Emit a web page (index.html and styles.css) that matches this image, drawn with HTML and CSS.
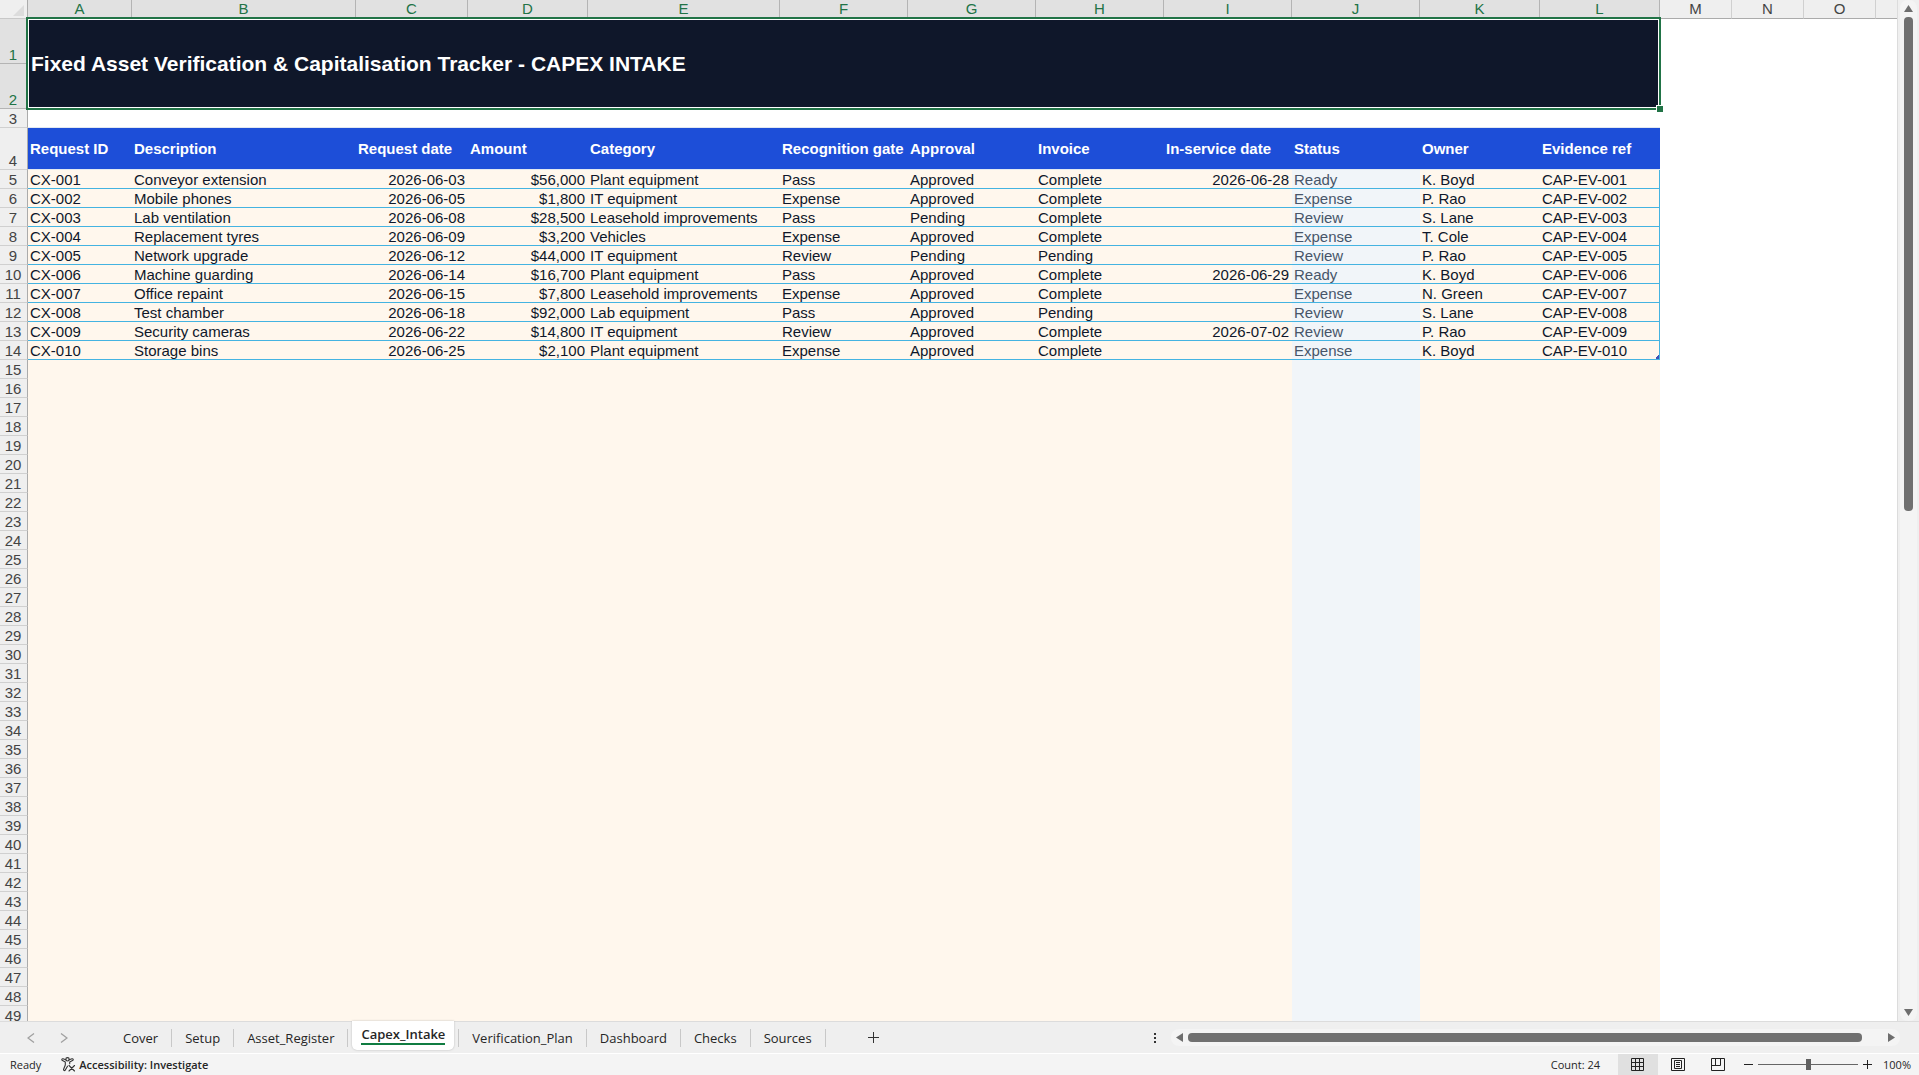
FILE: index.html
```html
<!DOCTYPE html>
<html lang="en">
<head>
  <meta charset="UTF-8">
  <meta name="viewport" content="width=device-width, initial-scale=1.0">
  <title>Fixed Asset Verification &amp; Capitalisation Tracker</title>
  <link rel="stylesheet" href="styles.css">
</head>
<body>
  <main class="workspace">
    <div class="grid">
      <table class="sheet">
        <colgroup>
          <col class="w-row">
          <col class="w-104"><col class="w-224"><col class="w-112"><col class="w-120">
          <col class="w-192"><col class="w-128"><col class="w-128"><col class="w-128">
          <col class="w-128"><col class="w-128"><col class="w-120"><col class="w-120">
          <col class="w-72"><col class="w-72"><col class="w-72"><col>
        </colgroup>
        <thead>
          <tr id="letters">
            <th class="corner"><svg width="11" height="11" viewBox="0 0 11 11"><path d="M11 0V11H0Z" fill="#dcdcdc"/></svg></th>
          </tr>
        </thead>
        <tbody id="rows">
          <tr class="title-row">
            <th class="num selected">1</th>
            <td class="title" colspan="12" rowspan="2">Fixed Asset Verification &amp; Capitalisation Tracker - CAPEX INTAKE<span class="handle"></span></td>
            <td colspan="4"></td>
          </tr>
          <tr class="title-row">
            <th class="num selected">2</th>
            <td colspan="4"></td>
          </tr>
          <tr>
            <th class="num">3</th>
            <td class="above-head" colspan="12"></td>
            <td colspan="4"></td>
          </tr>
          <tr class="head-row">
            <th class="num">4</th>
            <th>Request ID</th>
            <th>Description</th>
            <th>Request date</th>
            <th>Amount</th>
            <th>Category</th>
            <th>Recognition gate</th>
            <th>Approval</th>
            <th>Invoice</th>
            <th>In-service date</th>
            <th>Status</th>
            <th>Owner</th>
            <th>Evidence ref</th>
            <td colspan="4"></td>
          </tr>
        </tbody>
      </table>
    </div>
    <div class="vscroll">
      <button class="arrow" aria-label="Scroll up"><svg width="9" height="7" viewBox="0 0 9 7"><path d="M4.5 0 9 7H0Z" fill="#6e6e6e"/></svg></button>
      <div class="track"><div class="thumb"></div></div>
      <button class="arrow" aria-label="Scroll down"><svg width="9" height="7" viewBox="0 0 9 7"><path d="M0 0H9L4.5 7Z" fill="#6e6e6e"/></svg></button>
    </div>
  </main>

  <nav class="tabbar">
    <div class="tab-nav">
      <button aria-label="Previous sheet"><svg width="8" height="10" viewBox="0 0 8 10"><path d="M7 .5 1 5 7 9.500" fill="none" stroke="#a0a0a0" stroke-width="1.300"/></svg></button>
      <button aria-label="Next sheet"><svg width="8" height="10" viewBox="0 0 8 10"><path d="M1 .5 7 5 1 9.500" fill="none" stroke="#a0a0a0" stroke-width="1.300"/></svg></button>
    </div>
    <div class="tabs">
      <button class="tab">Cover</button>
      <button class="tab">Setup</button>
      <button class="tab">Asset_Register</button>
      <button class="tab active"><span>Capex_Intake</span></button>
      <button class="tab">Verification_Plan</button>
      <button class="tab">Dashboard</button>
      <button class="tab">Checks</button>
      <button class="tab">Sources</button>
    </div>
    <button class="add" aria-label="New sheet"><svg width="11" height="11" viewBox="0 0 11 11"><path d="M5.500 0V11M0 5.500H11" stroke="#333" stroke-width="1"/></svg></button>
    <button class="dots" aria-label="Resize tabs"><svg width="2" height="10" viewBox="0 0 2 10"><path d="M0 0h2v2H0zM0 4h2v2H0zM0 8h2v2H0z" fill="#333"/></svg></button>
    <div class="hscroll">
      <button class="arrow" aria-label="Scroll left"><svg width="7" height="9" viewBox="0 0 7 9"><path d="M7 0V9L0 4.500Z" fill="#6e6e6e"/></svg></button>
      <div class="track"><div class="thumb"></div></div>
      <button class="arrow" aria-label="Scroll right"><svg width="7" height="9" viewBox="0 0 7 9"><path d="M0 0 7 4.500 0 9Z" fill="#6e6e6e"/></svg></button>
    </div>
  </nav>

  <footer class="statusbar">
    <span class="ready">Ready</span>
    <button class="access">
      <svg width="15" height="15" viewBox="0 0 15 15" fill="none" stroke="#333" stroke-width="1.100" stroke-linecap="round" stroke-linejoin="round">
        <circle cx="6.500" cy="2.300" r="1.700"/>
        <path d="M4.800 2.800 2 1.800C.8 1.600.3 3 1.500 3.600L4.300 5V8L2.600 12.200C2.300 13.700 3.800 14 4.300 13L6.500 9.200M8.200 2.800 11 1.800C12.300 1.600 12.700 3 11.500 3.600L8.700 5V6.800"/>
        <path d="M8 8.500 13.500 14M13.500 8.500 8 14"/>
      </svg>
      Accessibility: Investigate
    </button>
    <span class="count">Count: 24</span>
    <div class="views">
      <button class="view on" aria-label="Normal"><svg width="14" height="14" viewBox="0 0 14 14"><path d="M.5 .5H12.500V12.500H.5ZM4.500 .5V12.500M8.500 .5V12.500M.5 4.500H12.500M.5 8.500H12.500" fill="none" stroke="#222"/></svg></button>
      <button class="view" aria-label="Page Layout"><svg width="14" height="14" viewBox="0 0 14 14"><path d="M.5 .5H13.500V12.500H.5ZM3.500 2.500H10.500V10.500H3.500ZM5 4.500H9M5 6.500H9M5 8.500H9" fill="none" stroke="#222"/></svg></button>
      <button class="view" aria-label="Page Break Preview"><svg width="14" height="14" viewBox="0 0 14 14"><path d="M.5 .5H13.500V12.500H.5ZM4.500 .5V7.500M9.500 .5V7.500M.5 7.500H9.500" fill="none" stroke="#222"/></svg></button>
    </div>
    <div class="zoom">
      <button aria-label="Zoom out"><svg width="9" height="9" viewBox="0 0 9 9"><path d="M0 4.500H9" stroke="#222"/></svg></button>
      <input type="range" min="0" max="100" value="50" aria-label="Zoom">
      <button aria-label="Zoom in"><svg width="9" height="9" viewBox="0 0 9 9"><path d="M0 4.500H9M4.500 0V9" stroke="#222"/></svg></button>
      <span class="percent">100%</span>
    </div>
  </footer>

  <script>
    const requests = [
      ['CX-001', 'Conveyor extension', '2026-06-03', '$56,000', 'Plant equipment', 'Pass', 'Approved', 'Complete', '2026-06-28', 'Ready', 'K. Boyd', 'CAP-EV-001'],
      ['CX-002', 'Mobile phones', '2026-06-05', '$1,800', 'IT equipment', 'Expense', 'Approved', 'Complete', '', 'Expense', 'P. Rao', 'CAP-EV-002'],
      ['CX-003', 'Lab ventilation', '2026-06-08', '$28,500', 'Leasehold improvements', 'Pass', 'Pending', 'Complete', '', 'Review', 'S. Lane', 'CAP-EV-003'],
      ['CX-004', 'Replacement tyres', '2026-06-09', '$3,200', 'Vehicles', 'Expense', 'Approved', 'Complete', '', 'Expense', 'T. Cole', 'CAP-EV-004'],
      ['CX-005', 'Network upgrade', '2026-06-12', '$44,000', 'IT equipment', 'Review', 'Pending', 'Pending', '', 'Review', 'P. Rao', 'CAP-EV-005'],
      ['CX-006', 'Machine guarding', '2026-06-14', '$16,700', 'Plant equipment', 'Pass', 'Approved', 'Complete', '2026-06-29', 'Ready', 'K. Boyd', 'CAP-EV-006'],
      ['CX-007', 'Office repaint', '2026-06-15', '$7,800', 'Leasehold improvements', 'Expense', 'Approved', 'Complete', '', 'Expense', 'N. Green', 'CAP-EV-007'],
      ['CX-008', 'Test chamber', '2026-06-18', '$92,000', 'Lab equipment', 'Pass', 'Approved', 'Pending', '', 'Review', 'S. Lane', 'CAP-EV-008'],
      ['CX-009', 'Security cameras', '2026-06-22', '$14,800', 'IT equipment', 'Review', 'Approved', 'Complete', '2026-07-02', 'Review', 'P. Rao', 'CAP-EV-009'],
      ['CX-010', 'Storage bins', '2026-06-25', '$2,100', 'Plant equipment', 'Expense', 'Approved', 'Complete', '', 'Expense', 'K. Boyd', 'CAP-EV-010']
    ];
    const rightAligned = [2, 3, 8];
    const statusCol = 9;
    const firstRow = 5;
    const lastRow = 49;

    // Column letters
    const letters = document.getElementById('letters');
    'ABCDEFGHIJKLMNO'.split('').forEach((letter, i) => {
      const th = document.createElement('th');
      th.className = i < 12 ? 'letter selected' : 'letter';
      th.textContent = letter;
      letters.appendChild(th);
    });
    letters.insertAdjacentHTML('beforeend', '<th class="letter last"></th>');

    // Data rows, then the empty input rows
    const tbody = document.getElementById('rows');
    for (let n = firstRow; n <= lastRow; n++) {
      const data = requests[n - firstRow];
      const row = document.createElement('tr');
      if (data) row.className = 'data-row';
      let html = `<th class="num">${n}</th>`;
      for (let c = 0; c < 12; c++) {
        let cls = c === statusCol ? 'input status' : 'input';
        if (rightAligned.includes(c)) cls += ' right';
        html += `<td class="${cls}">${data ? data[c] : ''}</td>`;
      }
      row.innerHTML = html + '<td colspan="4"></td>';
      tbody.appendChild(row);
    }
  </script>
</body>
</html>
```
FILE: styles.css
```css
* {
  box-sizing: border-box;
}
body {
  margin: 0;
  height: 100vh;
  display: flex;
  flex-direction: column;
  overflow: hidden;
  background: #efefef;
  color: #262626;
  font-family: "Open Sans", "Noto Sans", sans-serif;
}
button {
  display: flex;
  align-items: center;
  justify-content: center;
  padding: 0;
  border: none;
  background: none;
  color: inherit;
  font: inherit;
  cursor: pointer;
}
svg {
  display: block;
}

/* Sheet */
.workspace {
  flex: 1;
  min-height: 0;
  display: flex;
}
.grid {
  flex: 1;
  min-width: 0;
  overflow: hidden;
  background: #fff;
  border-right: 1px solid #dcdcdc;
}
.sheet {
  width: 100%;
  table-layout: fixed;
  border-collapse: separate;
  border-spacing: 0;
  font-family: Arial, "Liberation Sans", sans-serif;
  font-size: 15px;
  line-height: 16px;
  color: #0f172a;
}
.w-row { width: 28px; }
.w-72 { width: 72px; }
.w-104 { width: 104px; }
.w-112 { width: 112px; }
.w-120 { width: 120px; }
.w-128 { width: 128px; }
.w-192 { width: 192px; }
.w-224 { width: 224px; }

.sheet tr {
  height: 19px;
}
.sheet th,
.sheet td {
  padding: 2px 0 0;
  white-space: nowrap;
}
.sheet .corner {
  background: #efefef;
  border-right: 1px solid #ababab;
  border-bottom: 1px solid #c8c8c8;
}
.corner svg {
  margin-left: 13px;
}
.sheet .letter {
  padding-top: 0;
  line-height: 18px;
  background: #efefef;
  border-right: 1px solid #d0d0d0;
  border-bottom: 1px solid #ababab;
  color: #444;
  font-weight: normal;
}
.sheet .letter.selected {
  background: #e1e1e1;
  border-right-color: #b4b4b4;
  color: #217346;
}
.sheet .letter.last {
  border-right: none;
}
.sheet .num {
  padding-right: 1px;
  vertical-align: bottom;
  text-align: center;
  background: #efefef;
  border-right: 1px solid #ababab;
  border-bottom: 1px solid #d0d0d0;
  color: #444;
  font-weight: normal;
}
.sheet .num.selected {
  background: #e1e1e1;
  border-bottom-color: #b4b4b4;
  color: #217346;
}
.sheet .title-row {
  height: 45px;
}
.sheet .title {
  position: relative;
  padding: 0 0 0 3px;
  background: #0f172a;
  color: #fff;
  font-size: 21px;
  font-weight: bold;
}
/* selection frame */
.title::after {
  content: "";
  position: absolute;
  top: -2px;
  right: -1px;
  bottom: -1px;
  left: -2px;
  border: 2px solid #217346;
  box-shadow: inset 0 0 0 1px #fff;
}
.handle {
  position: absolute;
  right: -3px;
  bottom: -3px;
  z-index: 1;
  width: 7px;
  height: 7px;
  background: #217346;
  border: 1px solid #fff;
  border-width: 1px 0 0 1px;
}
.sheet .above-head {
  border-bottom: 1px solid #e2e8f0;
}
.sheet .head-row {
  height: 42px;
}
.head-row th:not(.num) {
  padding: 0 0 0 2px;
  text-align: left;
  background: #1d4ed8;
  border-bottom: 1px solid #e2e8f0;
  color: #fff;
}
.sheet .input {
  padding-left: 2px;
  background: #fff7ed;
}
.sheet .status {
  background: #f1f5f9;
  color: #475569;
}
.sheet .right {
  padding-right: 3px;
  text-align: right;
}
.data-row .input {
  border-bottom: 1px solid #44b3e1;
}
.data-row .input:nth-child(13) {
  border-right: 1px solid #44b3e1;
}
.data-row:nth-child(14) .input:nth-child(13) {
  background: linear-gradient(135deg, transparent 50%, #3f51b5 50%) right bottom / 4px 4px no-repeat #fff7ed;
}

/* Scrollbars */
.vscroll {
  display: flex;
  flex-direction: column;
  width: 17px;
  margin: 0 2px;
  border-radius: 8px;
  background: #f4f4f4;
}
.vscroll .arrow {
  height: 17px;
}
.vscroll .track {
  flex: 1;
  padding: 0 4px;
}
.vscroll .thumb {
  height: 50%;
  border-radius: 4px;
  background: #707070;
}
.hscroll {
  flex: 1;
  display: flex;
  align-items: center;
  max-width: 38%;
  height: 17px;
  margin-right: 19px;
  border-radius: 8px;
  background: #f4f4f4;
}
.hscroll .arrow {
  width: 17px;
  height: 17px;
}
.hscroll .track {
  flex: 1;
}
.hscroll .thumb {
  width: 97%;
  height: 9px;
  border-radius: 4px;
  background: #707070;
}

/* Sheet tabs */
.tabbar {
  display: flex;
  align-items: center;
  height: 33px;
  border-top: 1px solid #dcdcdc;
  border-bottom: 1px solid #fff;
  font-size: 13px;
}
.tab-nav {
  display: flex;
  gap: 25px;
  width: 110px;
  padding-left: 27px;
}
.tabs {
  display: flex;
  align-items: center;
  height: 32px;
}
.tab {
  height: 18px;
  padding: 0 13px;
  border-right: 1px solid #c8c8c8;
}
.tab.active {
  align-self: flex-start;
  height: 29px;
  margin: -1px 4px 0;
  padding: 0 9px;
  border: none;
  border-radius: 0 0 5px 5px;
  background: #fff;
  box-shadow: 0 0 2px #b4b4b4;
  font-weight: 600;
}
.tab.active + .tab {
  border-left: 1px solid #c8c8c8;
}
.tab.active span {
  border-bottom: 2px solid #107c41;
}
.add {
  margin-left: 42px;
}
.dots {
  margin-left: auto;
  padding: 0 15px;
}

/* Status bar */
.statusbar {
  display: flex;
  align-items: center;
  height: 21px;
  background: #f4f4f4;
  font-size: 11px;
}
.ready {
  padding: 0 20px 0 10px;
}
.access {
  gap: 3px;
  font-weight: 600;
}
.count {
  margin-left: auto;
  margin-right: 18px;
}
.views {
  display: flex;
  height: 100%;
}
.view {
  width: 40px;
}
.view.on {
  background: #e0e0e0;
}
.zoom {
  display: flex;
  align-items: center;
  gap: 5px;
  margin-left: 6px;
  padding-right: 8px;
}
.zoom input {
  appearance: none;
  width: 100px;
  height: 11px;
  margin: 0;
  background: linear-gradient(#666, #666) center / 100% 1px no-repeat;
}
.zoom input::-webkit-slider-thumb {
  appearance: none;
  width: 5px;
  height: 11px;
  background: #606060;
}
.percent {
  margin-left: 6px;
}
```
